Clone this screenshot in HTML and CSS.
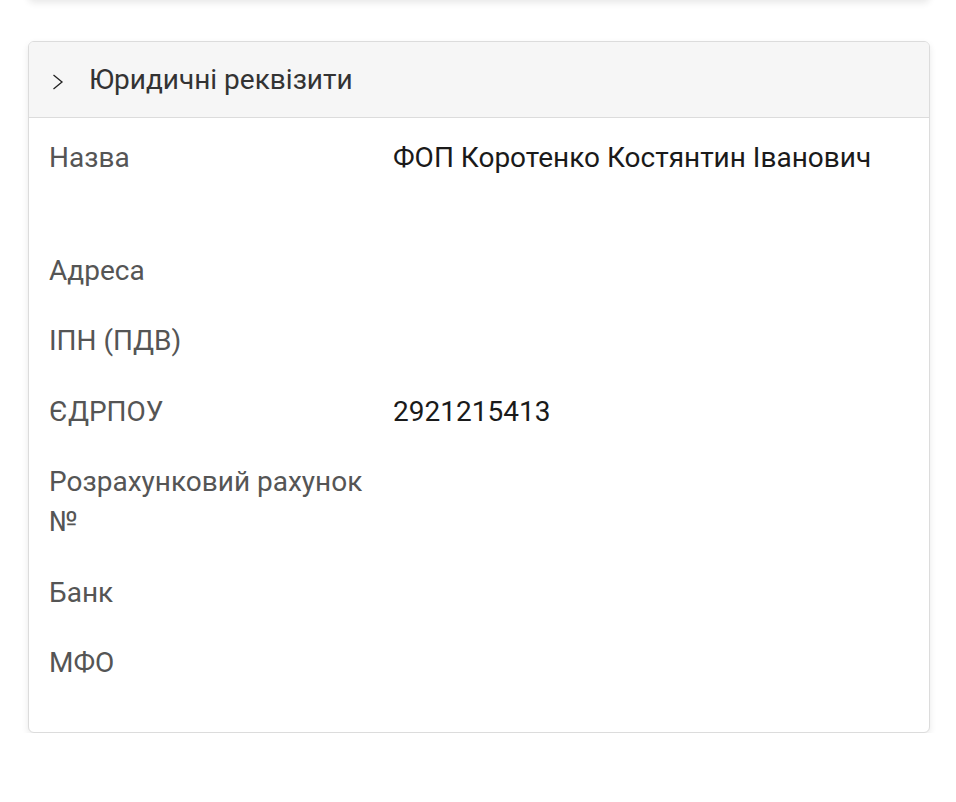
FILE: index.html
```html
<!DOCTYPE html>
<html lang="uk">
<head>
<meta charset="utf-8">
<link rel="stylesheet" href="styles.css">
</head>
<body>
<div class="page">
  <div class="card card-prev"></div>
  <section class="card">
    <header class="card-head">
      <svg class="chev" width="12" height="16" viewBox="0 0 12 16"><path d="M1.5 1 L10 8 L1.5 15" fill="none" stroke="#222" stroke-width="1.3"/></svg>
      <span class="card-title">Юридичні реквізити</span>
    </header>
    <div class="card-body">
      <div class="row row-tall"><div class="label">Назва</div><div class="value">ФОП Коротенко Костянтин Іванович</div></div>
      <div class="row"><div class="label">Адреса</div><div class="value"></div></div>
      <div class="row"><div class="label">ІПН (ПДВ)</div><div class="value"></div></div>
      <div class="row"><div class="label">ЄДРПОУ</div><div class="value">2921215413</div></div>
      <div class="row"><div class="label">Розрахунковий рахунок №</div><div class="value"></div></div>
      <div class="row"><div class="label">Банк</div><div class="value"></div></div>
      <div class="row"><div class="label">МФО</div><div class="value"></div></div>
    </div>
  </section>
</div>
</body>
</html>
```
FILE: styles.css
```css
html, body {
  margin: 0;
  padding: 0;
  background: #fff;
}
body {
  font-family: Roboto, "Noto Sans", sans-serif;
  font-size: 28px;
  color: #222;
}
.page {
  padding: 0 26px 0 28px;
  display: flex;
  flex-direction: column;
  gap: 41px;
}
.card {
  border: 1px solid #dcdcdc;
  border-radius: 6px;
  background: #fff;
  box-shadow: 0 3px 7px rgba(0, 0, 0, 0.09);
  overflow: hidden;
}
.card-prev {
  height: 40px;
  margin-top: -41px;
  border-top: none;
}
.card-head {
  height: 75px;
  background: #f6f6f6;
  border-bottom: 1px solid #dcdcdc;
  display: flex;
  align-items: center;
  padding-left: 23px;
}
.chev {
  display: block;
  margin-right: 25px;
  margin-top: 4px;
}
.card-title {
  color: #333;
  font-size: 28px;
}
.card-body {
  padding: 20px 20px 49px 20px;
  display: flex;
  flex-direction: column;
  gap: 30.5px;
}
.row {
  display: flex;
  line-height: 40px;
}
.row-tall {
  min-height: 82px;
}
.label {
  width: 344px;
  flex: none;
  color: #555;
}
.value {
  flex: 1;
  color: #1a1a1a;
}
```
